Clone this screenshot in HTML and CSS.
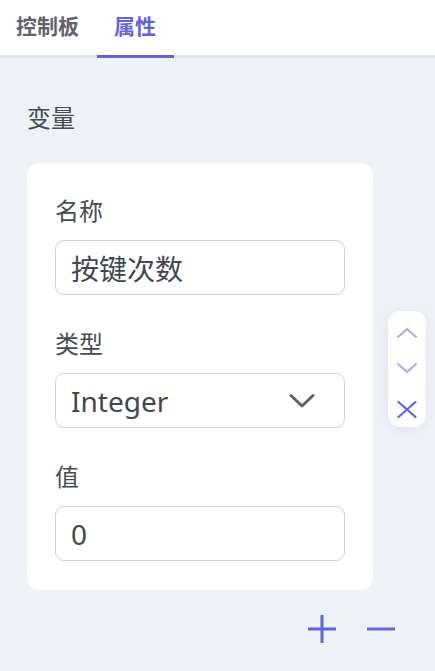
FILE: index.html
```html
<!DOCTYPE html>
<html lang="zh">
<head>
<meta charset="utf-8">
<link rel="stylesheet" href="styles.css">
</head>
<body>
<header class="tabs">
  <div class="tab">控制板</div>
  <div class="tab active">属性</div>
</header>
<main class="content">
  <div class="section-title">变量</div>
  <div class="row">
    <div class="card">
      <div class="field">
        <div class="label">名称</div>
        <div class="input">按键次数</div>
      </div>
      <div class="field">
        <div class="label">类型</div>
        <div class="input select">
          <span>Integer</span>
          <svg class="caret" width="26" height="16" viewBox="0 0 26 16"><path d="M2 2.5 L13 13 L24 2.5" fill="none" stroke="#5f6368" stroke-width="3" stroke-linecap="round" stroke-linejoin="round"/></svg>
        </div>
      </div>
      <div class="field">
        <div class="label">值</div>
        <div class="input num">0</div>
      </div>
    </div>
    <div class="side">
      <svg width="20" height="10" viewBox="0 0 20 10"><path d="M1 9 L10 1 L19 9" fill="none" stroke="#a9a9ee" stroke-width="2" stroke-linecap="round" stroke-linejoin="round"/></svg>
      <svg width="20" height="10" viewBox="0 0 20 10"><path d="M1 1 L10 9 L19 1" fill="none" stroke="#a9a9ee" stroke-width="2" stroke-linecap="round" stroke-linejoin="round"/></svg>
      <svg width="20" height="17" viewBox="0 0 20 17"><path d="M1.5 1 L18.5 16 M18.5 1 L1.5 16" fill="none" stroke="#6161d9" stroke-width="2.2" stroke-linecap="round"/></svg>
    </div>
  </div>
  <div class="actions">
    <svg width="28" height="28" viewBox="0 0 28 28"><path d="M14 0 V28 M0 14 H28" stroke="#6464da" stroke-width="3"/></svg>
    <svg width="28" height="28" viewBox="0 0 28 28"><path d="M0 14 H28" stroke="#6464da" stroke-width="3"/></svg>
  </div>
</main>
</body>
</html>
```

FILE: styles.css
```css
* { box-sizing: border-box; }
html, body { margin: 0; padding: 0; }
body {
  width: 435px;
  height: 671px;
  overflow: hidden;
  background: #eef1f6;
  font-family: "Noto Sans", "Noto Sans CJK SC", sans-serif;
  color: #464b52;
}
.tabs {
  height: 58px;
  background: #fff;
  border-bottom: 3px solid #e0e2e6;
  display: flex;
  gap: 3px;
}
.tab {
  padding: 0 15px 0 16px;
  font-size: 21px;
  font-weight: 700;
  color: #60646a;
  line-height: 52px;
}
.tab.active {
  color: #6363d8;
  padding: 0 18px 0 17px;
  border-bottom: 3px solid #6363d8;
  margin-bottom: -3px;
}
.content {
  padding: 45px 9px 0 27px;
}
.section-title {
  font-size: 24px;
  line-height: 30px;
  height: 30px;
}
.row {
  margin-top: 30px;
  display: flex;
  align-items: center;
}
.card {
  width: 346px;
  background: #fff;
  border-radius: 12px;
  padding: 33px 28px 29px;
  display: flex;
  flex-direction: column;
  gap: 34px;
}
.label {
  font-size: 24px;
  line-height: 30px;
  margin-bottom: 14px;
}
.input {
  height: 55px;
  border: 1px solid #cfd1d5;
  border-radius: 9px;
  padding: 0 15px;
  display: flex;
  align-items: center;
  font-size: 28px;
  color: #42474e;
}
.select {
  justify-content: space-between;
  padding-right: 29px;
}
.side {
  margin-left: 15px;
  margin-bottom: 15px;
  width: 38px;
  height: 116px;
  background: #fff;
  border-radius: 12px;
  box-shadow: 0 2px 8px rgba(80, 90, 120, 0.08);
  display: flex;
  flex-direction: column;
  align-items: center;
  padding-top: 17px;
  gap: 25px;
}
.side svg { display: block; }
.side svg:last-child { margin-top: 3px; }
.actions {
  display: flex;
  justify-content: flex-end;
  gap: 31px;
  padding-right: 31px;
  margin-top: 25px;
}
.actions svg { display: block; }
```
